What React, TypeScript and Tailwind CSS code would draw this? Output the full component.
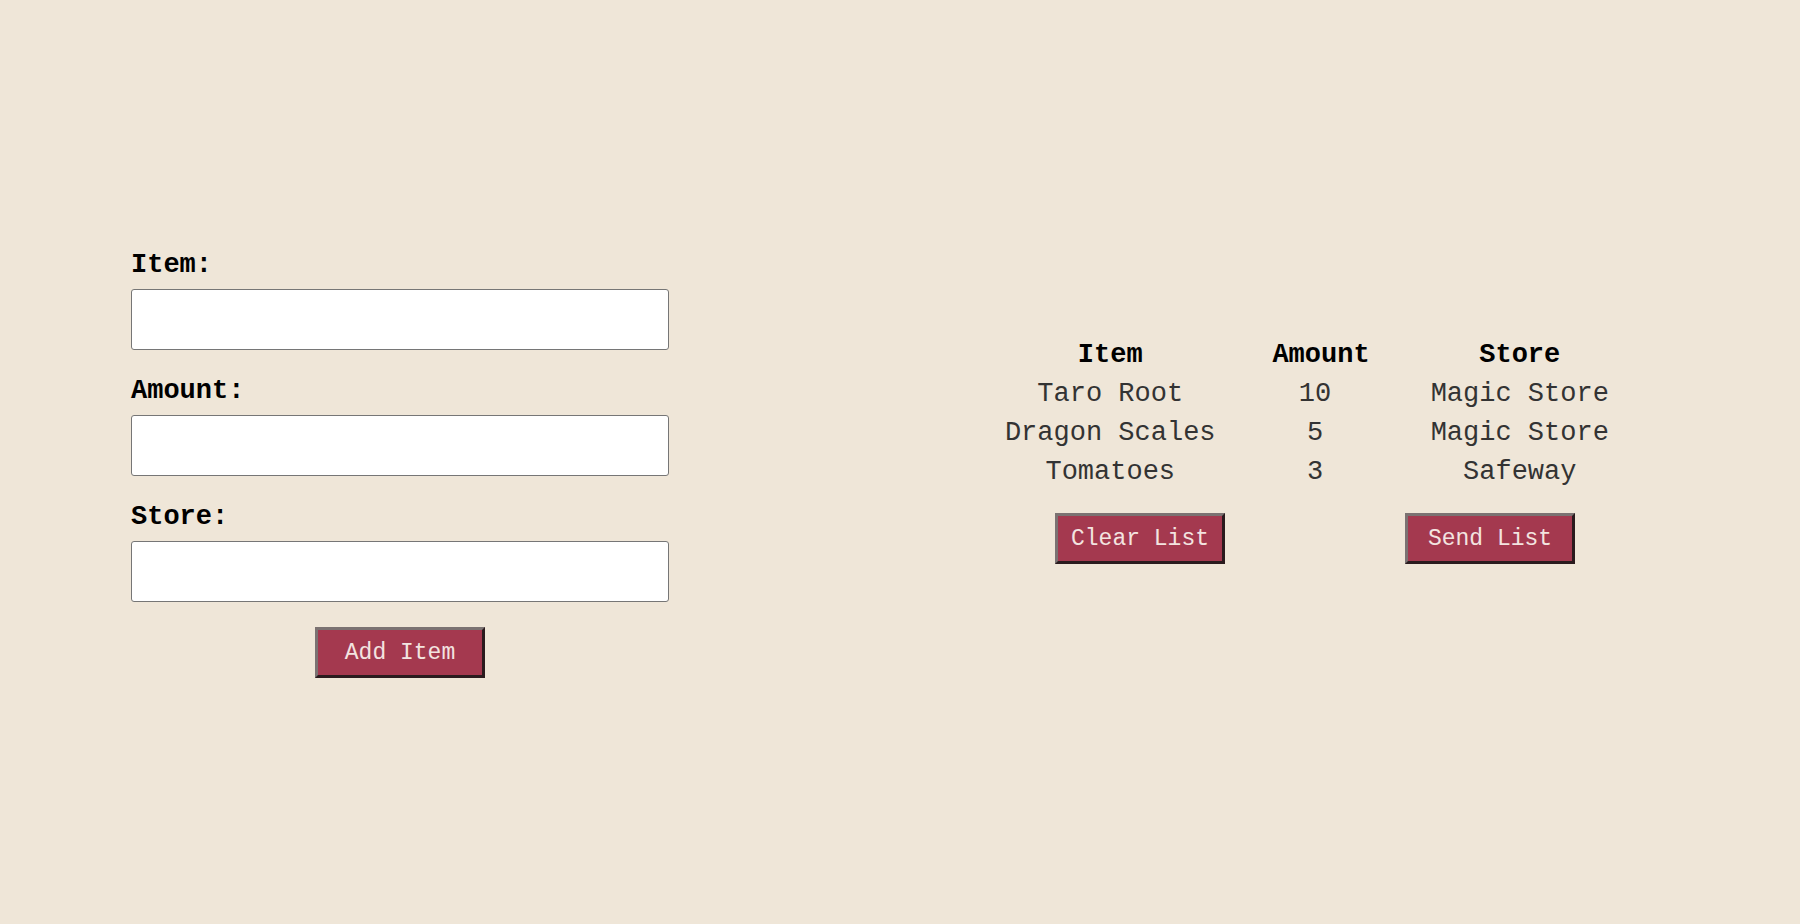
import { useState } from "react";
import type { FormEvent } from "react";

type Entry = { item: string; amount: string; store: string };

const initialList: Entry[] = [
  { item: "Taro Root", amount: "10", store: "Magic Store" },
  { item: "Dragon Scales", amount: "5", store: "Magic Store" },
  { item: "Tomatoes", amount: "3", store: "Safeway" },
];

const fields: { name: keyof Entry; label: string }[] = [
  { name: "item", label: "Item:" },
  { name: "amount", label: "Amount:" },
  { name: "store", label: "Store:" },
];

const emptyEntry: Entry = { item: "", amount: "", store: "" };

const buttonClass =
  "h-[51px] w-[170px] cursor-pointer border-[3px] border-t-[#7b7272] border-l-[#7b7272] border-r-[#2a1b1e] border-b-[#2a1b1e] bg-[#a4394f] text-[23px] leading-7 whitespace-nowrap text-[#f3e4e0]";

export default function App() {
  const [list, setList] = useState<Entry[]>(initialList);
  const [draft, setDraft] = useState<Entry>(emptyEntry);

  const addItem = (event: FormEvent) => {
    event.preventDefault();
    if (!draft.item) return;
    setList([...list, draft]);
    setDraft(emptyEntry);
  };

  return (
    <main className="grid min-h-screen grid-cols-[538fr_700fr] items-center gap-x-[296px] bg-[#efe6d8] pt-[3px] pr-[135px] pl-[131px] font-['Courier_New','Liberation_Mono',monospace] text-[27px] text-black">
      <form onSubmit={addItem} className="flex flex-col gap-[25px]">
        {fields.map(({ name, label }) => (
          <div key={name} className="flex flex-col gap-2">
            <label htmlFor={name} className="leading-8 font-bold">
              {label}
            </label>
            <input
              id={name}
              type="text"
              value={draft[name]}
              onChange={(e) => setDraft({ ...draft, [name]: e.target.value })}
              className="h-[61px] w-full rounded-[3px] border border-[#767676] bg-white px-2"
            />
          </div>
        ))}
        <button type="submit" className={`${buttonClass} self-center`}>
          Add Item
        </button>
      </form>

      <section className="mb-7 flex flex-col gap-[21px]">
        <table className="w-full table-fixed text-center leading-[39px]">
          <colgroup>
            <col />
            <col className="w-[17%]" />
            <col />
          </colgroup>
          <thead className="leading-10">
            <tr>
              <th scope="col">Item</th>
              <th scope="col" className="pl-3">Amount</th>
              <th scope="col">Store</th>
            </tr>
          </thead>
          <tbody className="text-[#333333]">
            {list.map((entry, index) => (
              <tr key={index}>
                <td>{entry.item}</td>
                <td>{entry.amount}</td>
                <td>{entry.store}</td>
              </tr>
            ))}
          </tbody>
        </table>
        <div className="flex justify-around">
          <button type="button" className={buttonClass} onClick={() => setList([])}>
            Clear List
          </button>
          <button type="button" className={buttonClass}>
            Send List
          </button>
        </div>
      </section>
    </main>
  );
}
